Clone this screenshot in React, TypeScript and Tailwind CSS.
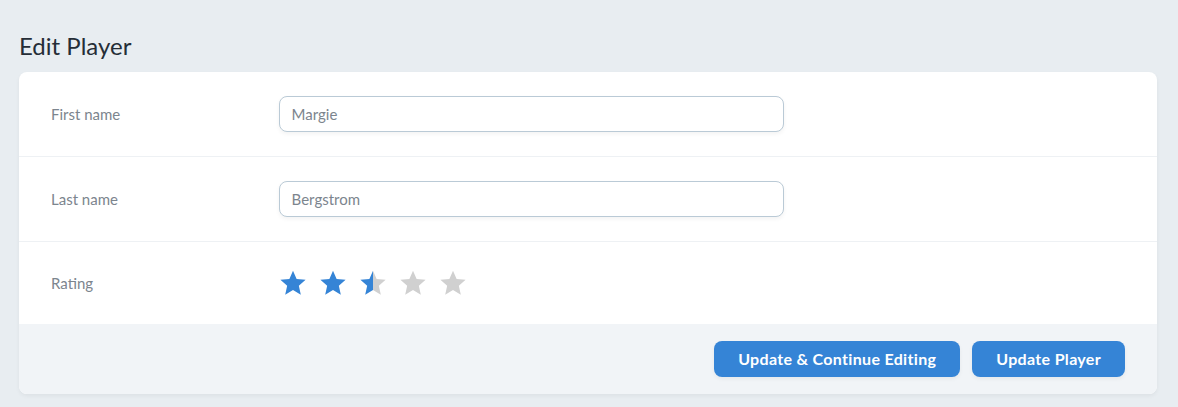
import { useState } from 'react';

const STAR_PATH =
  'M12 1.5l3.1 7.1 7.7.7-5.8 5.1 1.7 7.6L12 18l-6.7 4 1.7-7.6L1.2 9.3l7.7-.7z';

function Star({ fill }: { fill: 'full' | 'half' | 'empty' }) {
  const blue = '#3584d6';
  const gray = '#d0d0d0';
  return (
    <svg width="28" height="28" viewBox="0 0 24 24">
      {fill === 'half' && (
        <defs>
          <linearGradient id="half-star">
            <stop offset="50%" stopColor={blue} />
            <stop offset="50%" stopColor={gray} />
          </linearGradient>
        </defs>
      )}
      <path
        d={STAR_PATH}
        fill={fill === 'full' ? blue : fill === 'half' ? 'url(#half-star)' : gray}
      />
    </svg>
  );
}

export default function App() {
  const [firstName, setFirstName] = useState('Margie');
  const [lastName, setLastName] = useState('Bergstrom');
  const rating = 2.5;

  return (
    <div
      className="min-h-[407px] bg-[#e8edf1] pl-[19px] pr-[21px] pt-[30px] pb-[14px]"
      style={{ fontFamily: 'Lato, "Open Sans", sans-serif' }}
    >
      <h1 className="mb-[10px] text-2xl leading-8 font-normal text-[#252d37]">Edit Player</h1>

      <div className="rounded-lg bg-white shadow-[0_2px_4px_0_rgba(0,0,0,0.05)]">
        {/* First name */}
        <div className="flex border-b border-[#eef1f4]">
          <div className="w-1/5 px-8 py-6">
            <label className="block text-[15px] leading-9 text-[#7c858e]">First name</label>
          </div>
          <div className="w-1/2 px-8 py-6">
            <input
              type="text"
              value={firstName}
              onChange={(e) => setFirstName(e.target.value)}
              className="h-9 w-full rounded-lg border border-[#bacad6] bg-white px-3 text-[15px] text-[#7c858e] shadow-[0_2px_4px_0_rgba(0,0,0,0.05)] outline-none"
            />
          </div>
        </div>

        {/* Last name */}
        <div className="flex border-b border-[#eef1f4]">
          <div className="w-1/5 px-8 py-6">
            <label className="block text-[15px] leading-9 text-[#7c858e]">Last name</label>
          </div>
          <div className="w-1/2 px-8 py-6">
            <input
              type="text"
              value={lastName}
              onChange={(e) => setLastName(e.target.value)}
              className="h-9 w-full rounded-lg border border-[#bacad6] bg-white px-3 text-[15px] text-[#7c858e] shadow-[0_2px_4px_0_rgba(0,0,0,0.05)] outline-none"
            />
          </div>
        </div>

        {/* Rating */}
        <div className="flex">
          <div className="w-1/5 px-8 py-6">
            <label className="block text-[15px] leading-[34px] text-[#7c858e]">Rating</label>
          </div>
          <div className="flex w-1/2 items-center gap-3 px-8 py-6">
            {[1, 2, 3, 4, 5].map((n) => (
              <Star
                key={n}
                fill={rating >= n ? 'full' : rating >= n - 0.5 ? 'half' : 'empty'}
              />
            ))}
          </div>
        </div>

        {/* Footer */}
        <div className="flex justify-end gap-3 rounded-b-lg bg-[#f1f4f7] px-8 py-[17px]">
          <button className="h-9 rounded-lg bg-[#3584d6] px-6 text-base font-bold tracking-[0.02em] text-white shadow-[0_2px_4px_0_rgba(0,0,0,0.05)]">
            Update &amp; Continue Editing
          </button>
          <button className="h-9 rounded-lg bg-[#3584d6] px-6 text-base font-bold tracking-[0.02em] text-white shadow-[0_2px_4px_0_rgba(0,0,0,0.05)]">
            Update Player
          </button>
        </div>
      </div>
    </div>
  );
}
